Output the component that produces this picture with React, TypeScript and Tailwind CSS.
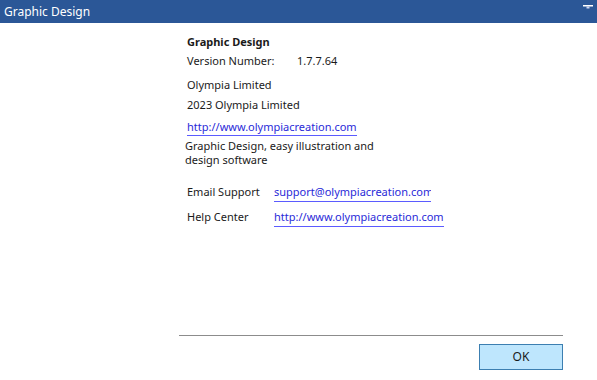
export default function App() {
  const font = { fontFamily: '"Noto Sans", "Open Sans", sans-serif' };
  return (
    <div className="w-[597px] h-[380px] bg-white flex flex-col text-[11px] text-[#1a1a1a]" style={font}>
      {/* Title bar */}
      <div className="h-[23px] bg-[#2b5797] flex items-center justify-between pl-[4px] pr-[3px] shrink-0">
        <span className="text-white text-[12px] leading-none">Graphic Design</span>
        <svg width="12" height="6" viewBox="0 0 12 6" className="mb-[8px]">
          <rect x="1" y="0" width="10" height="1.5" fill="#ffffff" />
          <rect x="4.5" y="1.5" width="3" height="2" fill="#c8d2f0" />
        </svg>
      </div>

      {/* Body */}
      <div className="flex-1 flex flex-col pl-[187px] pt-[10px]">
        <div className="font-bold leading-[18px]">Graphic Design</div>
        <div className="flex leading-[18px] mt-[1px]">
          <span className="w-[110px]">Version Number:</span>
          <span>1.7.7.64</span>
        </div>
        <div className="leading-[18px] mt-[6px]">Olympia Limited</div>
        <div className="leading-[18px] mt-[2px]">2023 Olympia Limited</div>
        <div className="mt-[4px]">
          <span className="leading-[18px] text-[#2a2ad8] border-b border-[#5b5bff] pb-[1px]">
            http://www.olympiacreation.com
          </span>
        </div>
        <div className="leading-[14px] -ml-[2px] mt-[3px] w-[200px]">
          Graphic Design, easy illustration and design software
        </div>

        <div className="flex mt-[16px] leading-[18px]">
          <span className="w-[87px]">Email Support</span>
          <span className="w-[157px] overflow-hidden whitespace-nowrap text-[#2a2ad8] border-b border-[#5b5bff]">
            support@olympiacreation.com
          </span>
        </div>
        <div className="flex mt-[6px] leading-[18px]">
          <span className="w-[87px]">Help Center</span>
          <span className="text-[#2a2ad8] border-b border-[#5b5bff]">http://www.olympiacreation.com</span>
        </div>
      </div>

      {/* Footer */}
      <div className="shrink-0 pl-[179px] pr-[34px] pb-[10px]">
        <div className="h-[1px] bg-[#8c8c8c]" />
        <div className="flex justify-end mt-[8px]">
          <button className="w-[84px] h-[26px] bg-[#bee6fd] border border-[#3c7fb1] text-[12px] text-[#1a1a1a]">
            OK
          </button>
        </div>
      </div>
    </div>
  );
}
